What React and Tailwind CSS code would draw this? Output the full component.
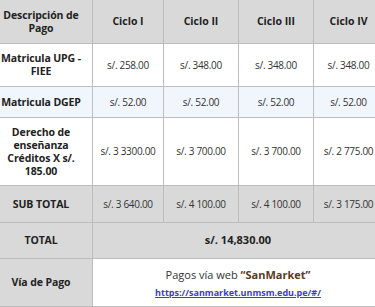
export default function App() {
  const cell = "border border-[#bdbdbd] text-center align-middle px-1";
  const label = "border border-[#bdbdbd] text-center align-middle pl-0 pr-[10px] font-bold text-[#222] text-[10.5px] leading-[13px] tracking-[-0.01em]";
  const val = cell + " text-[10px] text-[#333] tracking-[-0.03em]";
  const rows = [
    { label: "Matricula UPG - FIEE", vals: ["s/. 258.00", "s/. 348.00", "s/. 348.00", "s/. 348.00"], bg: "bg-white", h: "h-[43px]" },
    { label: "Matricula DGEP", vals: ["s/. 52.00", "s/. 52.00", "s/. 52.00", "s/. 52.00"], bg: "bg-[#f1f6fc]", h: "h-[31px]" },
    { label: "Derecho de enseñanza Créditos X s/. 185.00", vals: ["s/. 3 3300.00", "s/. 3 700.00", "s/. 3 700.00", "s/. 2 775.00"], bg: "bg-white", h: "h-[68px]" },
    { label: "SUB TOTAL", vals: ["s/. 3 640.00", "s/. 4 100.00", "s/. 4 100.00", "s/. 3 175.00"], bg: "bg-[#d9d9d9]", h: "h-[37px]" },
  ];
  return (
    <div className="w-[375px] h-[307px] overflow-hidden bg-white" style={{ fontFamily: '"Open Sans", "Noto Sans", sans-serif' }}>
      <table className="border-collapse table-fixed w-[384px] mt-[-1px] ml-[-1px]">
        <colgroup>
          <col className="w-[93px]" />
          <col className="w-[71px]" />
          <col className="w-[75px]" />
          <col className="w-[75px]" />
          <col className="w-[70px]" />
        </colgroup>
        <thead>
          <tr className="h-[44px] bg-[#d9d9d9]">
            <th className={label}>Descripción de Pago</th>
            <th className={cell + " font-bold text-[10.5px] text-[#222]"}>Ciclo I</th>
            <th className={cell + " font-bold text-[10.5px] text-[#222]"}>Ciclo II</th>
            <th className={cell + " font-bold text-[10.5px] text-[#222]"}>Ciclo III</th>
            <th className={cell + " font-bold text-[10.5px] text-[#222]"}>Ciclo IV</th>
          </tr>
        </thead>
        <tbody>
          {rows.map((r) => (
            <tr key={r.label} className={r.bg + " " + r.h}>
              <td className={label}>{r.label}</td>
              {r.vals.map((v, i) => (
                <td key={i} className={val}>{v}</td>
              ))}
            </tr>
          ))}
          <tr className="h-[36px] bg-[#d9d9d9]">
            <td className={label}>TOTAL</td>
            <td colSpan={4} className={cell + " font-bold text-[11px] text-[#222]"}>s/. 14,830.00</td>
          </tr>
          <tr className="h-[48px]">
            <td className={label + " bg-[#d9d9d9]"}>Vía de Pago</td>
            <td colSpan={4} className={cell + " bg-white"}>
              <div className="text-[11px] text-[#333] leading-[15px]">
                Pagos vía web <span className="font-bold text-[#5b3b1c]">“SanMarket”</span>
              </div>
              <div className="mt-[5px] text-[9px] font-bold leading-[12px]">
                <a href="#" className="text-[#3d3dc8] underline">https://sanmarket.unmsm.edu.pe/#/</a>
              </div>
            </td>
          </tr>
        </tbody>
      </table>
    </div>
  );
}
